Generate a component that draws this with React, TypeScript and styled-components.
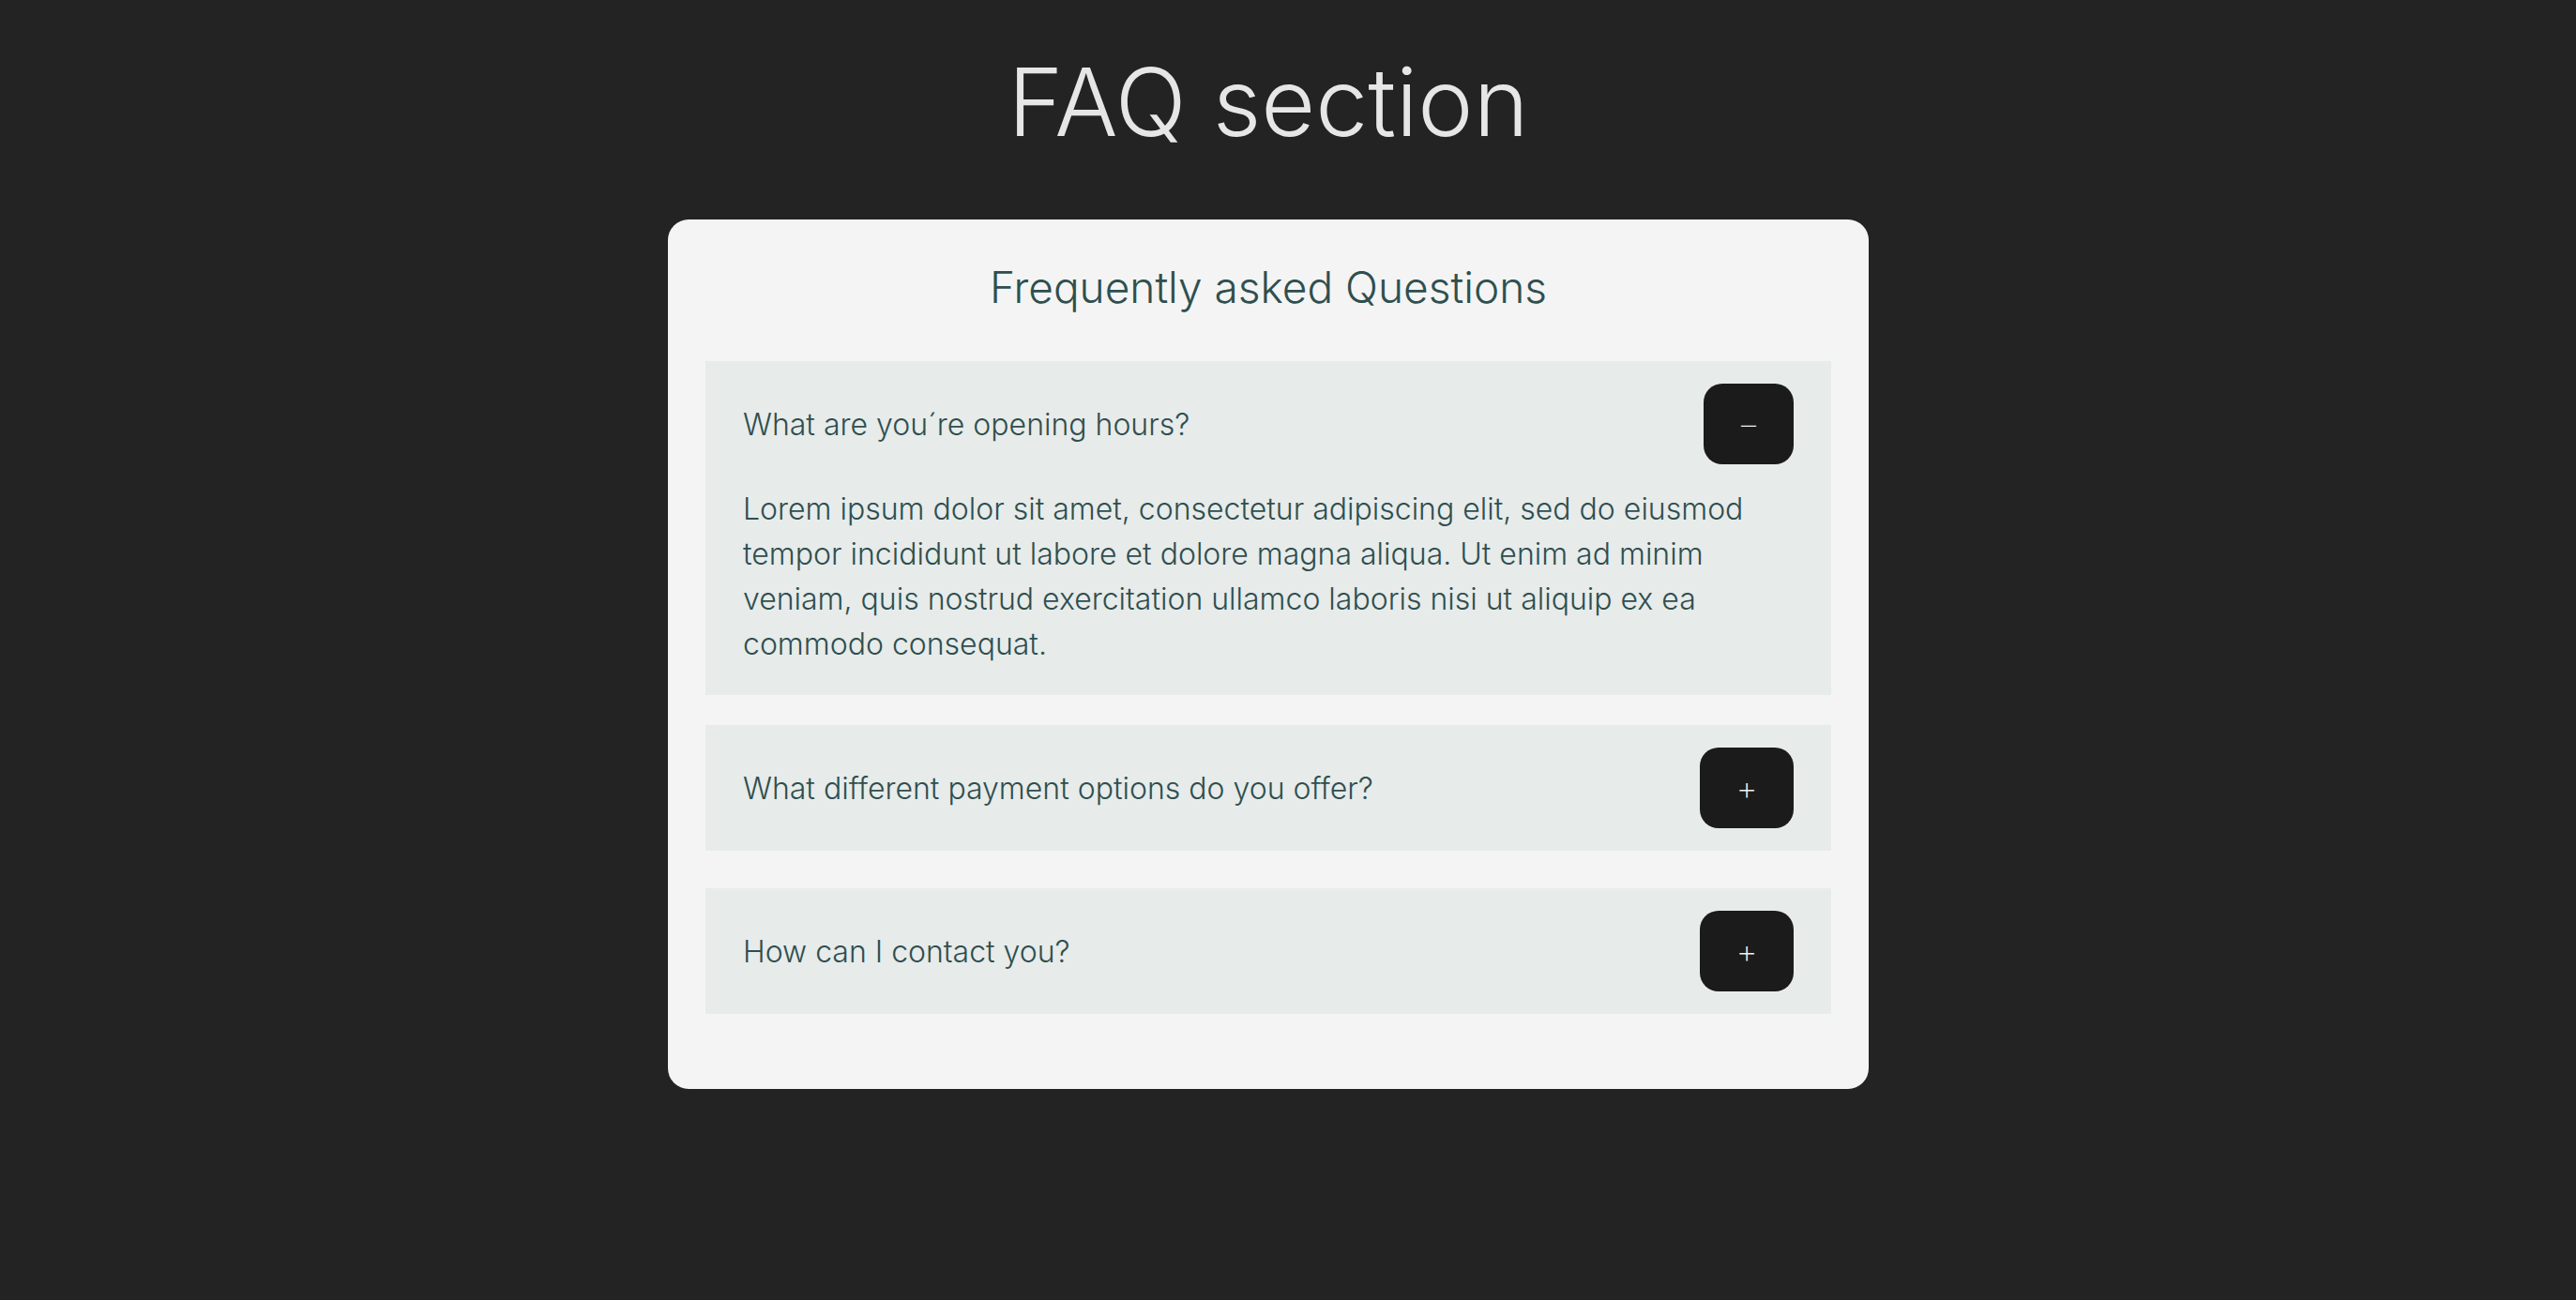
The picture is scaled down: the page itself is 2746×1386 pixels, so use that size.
import React, { useState } from "react";
import styled, { createGlobalStyle } from "styled-components";

const GlobalStyle = createGlobalStyle`
  html, body {
    margin: 0;
    padding: 0;
    background: #232323;
  }
  body {
    font-family: Inter, Roboto, "Liberation Sans", Arial, sans-serif;
    font-weight: 300;
  }
  * { box-sizing: border-box; }
`;

const Page = styled.main`
  display: flex;
  flex-direction: column;
  align-items: center;
  min-height: 1386px;
  padding-right: 42px;
  background: #232323;
`;

const Title = styled.h1`
  margin: 48px 0 0;
  font-size: 100px;
  font-weight: 300;
  line-height: normal;
  color: #e6e6e6;
  letter-spacing: 0;
`;

const Card = styled.section`
  width: 1280px;
  margin-top: 65px;
  background: #f4f4f4;
  border-radius: 22px;
  padding: 44px 40px 80px;
`;

const Heading = styled.h2`
  margin: 0 0 51px;
  text-align: center;
  font-size: 46px;
  font-weight: 300;
  line-height: normal;
  color: #2f4f4f;
`;

const List = styled.div`
  display: flex;
  flex-direction: column;
`;

const Item = styled.div<{ $gapTop: number }>`
  background: #e7ebea;
  padding: 24px 40px;
  margin-top: ${(p) => p.$gapTop}px;
`;

const Row = styled.div`
  display: flex;
  align-items: center;
  justify-content: space-between;
`;

const Question = styled.h3`
  margin: 0;
  font-size: 32px;
  font-weight: 300;
  line-height: normal;
  color: #2f4f4f;
`;

const ToggleButton = styled.button<{ $open: boolean }>`
  width: ${(p) => (p.$open ? 96 : 100)}px;
  height: 86px;
  border: none;
  border-radius: 20px;
  background: #1b1b1b;
  color: #f0f0f0;
  font-family: Inter, Roboto, "Liberation Sans", Arial, sans-serif;
  font-weight: 200;
  font-size: ${(p) => (p.$open ? 32 : 36)}px;
  display: flex;
  align-items: center;
  justify-content: center;
  cursor: pointer;
  padding: 0;
`;

const Answer = styled.p`
  margin: 24px 0 6px;
  font-size: 32px;
  line-height: 48px;
  font-weight: 300;
  color: #2f4f4f;
  max-width: 1120px;
`;

const faqs = [
  {
    q: "What are you´re opening hours?",
    a: "Lorem ipsum dolor sit amet, consectetur adipiscing elit, sed do eiusmod tempor incididunt ut labore et dolore magna aliqua. Ut enim ad minim veniam, quis nostrud exercitation ullamco laboris nisi ut aliquip ex ea commodo consequat.",
  },
  {
    q: "What different payment options do you offer?",
    a: "Lorem ipsum dolor sit amet, consectetur adipiscing elit.",
  },
  {
    q: "How can I contact you?",
    a: "Lorem ipsum dolor sit amet, consectetur adipiscing elit.",
  },
];

const gaps = [0, 32, 40];

export default function App() {
  const [open, setOpen] = useState<number | null>(0);
  return (
    <Page>
      <GlobalStyle />
      <Title>FAQ section</Title>
      <Card>
        <Heading>Frequently asked Questions</Heading>
        <List>
          {faqs.map((f, i) => {
            const isOpen = open === i;
            return (
              <Item key={f.q} $gapTop={gaps[i]}>
                <Row>
                  <Question>{f.q}</Question>
                  <ToggleButton
                    $open={isOpen}
                    onClick={() => setOpen(isOpen ? null : i)}
                    aria-label={isOpen ? "Collapse" : "Expand"}
                  >
                    {isOpen ? "–" : "+"}
                  </ToggleButton>
                </Row>
                {isOpen && <Answer>{f.a}</Answer>}
              </Item>
            );
          })}
        </List>
      </Card>
    </Page>
  );
}
